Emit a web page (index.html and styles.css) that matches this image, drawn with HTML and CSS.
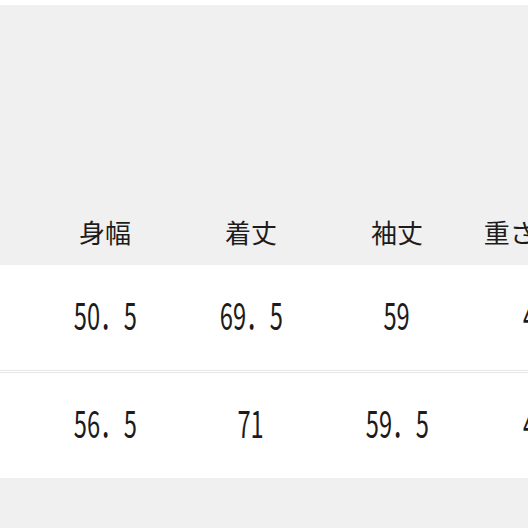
FILE: index.html
```html
<!DOCTYPE html>
<html lang="ja">
<head>
<meta charset="utf-8">
<link rel="stylesheet" href="styles.css">
</head>
<body>
<div class="page">
  <div class="topline"></div>
  <div class="table">
    <div class="row head">
      <div class="cell"><span class="label">身幅</span></div>
      <div class="cell"><span class="label">着丈</span></div>
      <div class="cell"><span class="label">袖丈</span></div>
      <div class="cell"><span class="label">重さ（g）</span></div>
    </div>
    <div class="row body first">
      <div class="cell"><span class="num">50．5</span></div>
      <div class="cell"><span class="num">69．5</span></div>
      <div class="cell"><span class="num">59</span></div>
      <div class="cell"><span class="num">430</span></div>
    </div>
    <div class="sep"></div>
    <div class="row body">
      <div class="cell"><span class="num">56．5</span></div>
      <div class="cell"><span class="num">71</span></div>
      <div class="cell"><span class="num">59．5</span></div>
      <div class="cell"><span class="num">480</span></div>
    </div>
  </div>
</div>
</body>
</html>
```
FILE: styles.css
```css
html, body {
  margin: 0;
  padding: 0;
  background: #f0f0f0;
}
.page {
  width: 528px;
  height: 528px;
  overflow: hidden;
  font-family: "Noto Sans CJK JP", "Noto Sans", sans-serif;
  color: #1c1c1c;
}
.topline {
  height: 5px;
  background: #ffffff;
}
.table {
  padding-top: 198px;
  width: 616px;
}
.row {
  display: grid;
  grid-template-columns: 146px 146px 146px 146px;
  padding-left: 32px;
}
.cell {
  display: flex;
  align-items: center;
  justify-content: center;
  white-space: nowrap;
}
.head {
  height: 58px;
  padding-bottom: 4px;
}
.label {
  font-size: 26px;
  line-height: 1;
}
.body {
  height: 99px;
  padding-bottom: 6px;
  background: #ffffff;
}
.num {
  display: inline-block;
  font-size: 37px;
  line-height: 1;
  transform: scaleX(0.64);
}
.sep {
  height: 1px;
  background: #ffffff;
  border-top: 1px solid #e6e6e6;
  border-bottom: 1px solid #e6e6e6;
}
```
